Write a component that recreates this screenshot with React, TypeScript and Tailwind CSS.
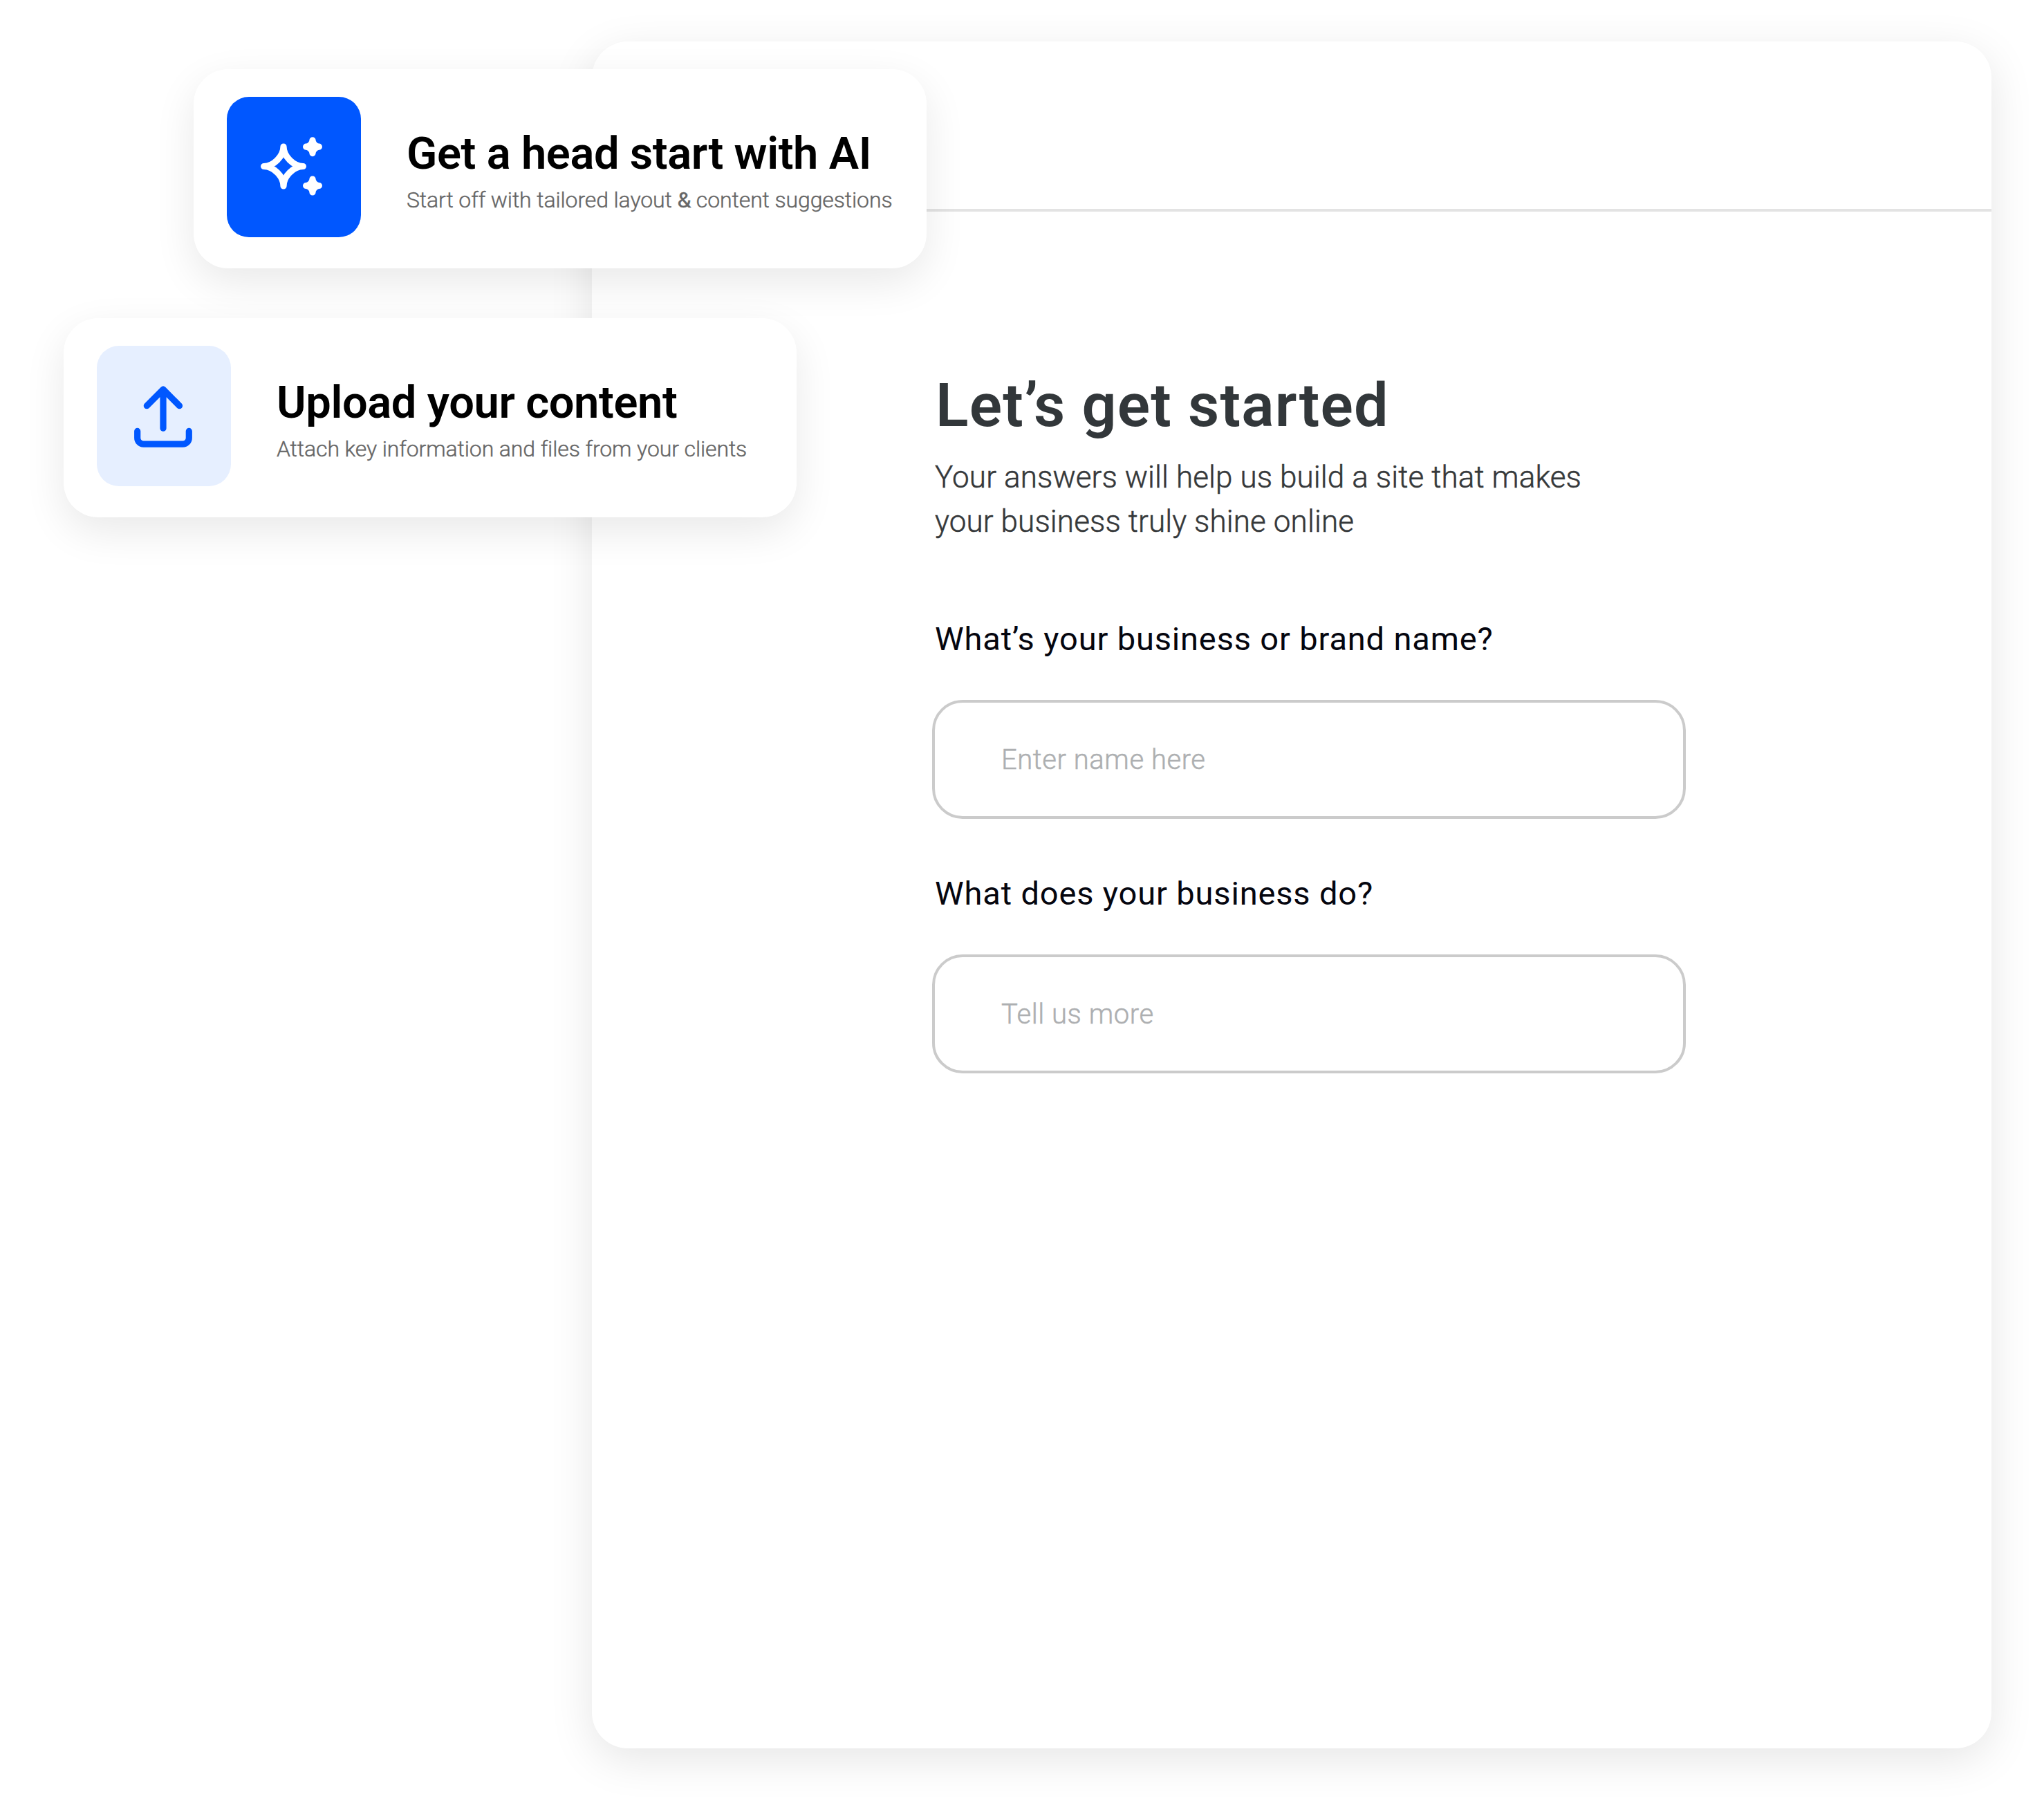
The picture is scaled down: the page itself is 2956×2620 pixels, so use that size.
import type { ReactNode } from "react";

const SparklesIcon = () => (
    <svg
        viewBox="0 0 104 104"
        className="h-[104px] w-[104px]"
        fill="none"
        stroke="currentColor"
        strokeWidth="9.2"
        strokeLinecap="round"
        strokeLinejoin="round"
    >
        <path d="M37 22.1C37 36 51.5 50.5 65.4 50.5C51.5 50.5 37 65 37 78.9C37 65 22.5 50.5 8.6 50.5C22.5 50.5 37 36 37 22.1Z" />
        <path fill="currentColor" d="M79 12.8C79 17.4 83.8 22.2 88.4 22.2C83.8 22.2 79 27 79 31.6C79 27 74.2 22.2 69.6 22.2C74.2 22.2 79 17.4 79 12.8Z" />
        <path fill="currentColor" d="M79 69.1C79 73.7 83.8 78.5 88.4 78.5C83.8 78.5 79 83.3 79 87.9C79 83.3 74.2 78.5 69.6 78.5C74.2 78.5 79 73.7 79 69.1Z" />
    </svg>
);

const UploadIcon = () => (
    <svg
        viewBox="0 0 104 104"
        className="h-[104px] w-[104px]"
        fill="none"
        stroke="currentColor"
        strokeWidth="9.2"
        strokeLinecap="round"
        strokeLinejoin="round"
    >
        <path d="M51 69.2V13M27.3 36.7L51 13L74.5 36.7" />
        <path d="M13.7 73.4V83.2C13.7 88.2 17.7 92.2 22.7 92.2H79.3C84.3 92.2 88.3 88.2 88.3 83.2V73.4" />
    </svg>
);

const FeatureCard = ({
    title,
    description,
    icon,
    className,
    iconClassName,
}: {
    title: string;
    description: ReactNode;
    icon: ReactNode;
    className: string;
    iconClassName: string;
}) => (
    <div className={`flex h-[288px] w-[1060px] rounded-[50px] bg-white pt-10 pl-12 shadow-[0_20px_60px_rgba(0,0,0,0.09)] ${className}`}>
        <div className={`flex h-[203px] w-[194px] shrink-0 items-center justify-center rounded-[32px] ${iconClassName}`}>
            {icon}
        </div>
        <div className="ml-[66px] pt-[42px] whitespace-nowrap">
            <h3 className="text-[65px] leading-[80px] font-semibold tracking-[-0.4px] text-black">
                {title}
            </h3>
            <p className="mt-[3px] text-[32px] leading-[48px] font-light tracking-[-0.12px] text-[#666] [-webkit-text-stroke:0.4px]">
                {description}
            </p>
        </div>
    </div>
);

const Field = ({ label, placeholder }: { label: string; placeholder: string }) => (
    <div className="flex flex-col">
        <label className="ml-1 text-[47px] leading-[56px] tracking-[0.85px] text-[#05060f]">
            {label}
        </label>
        <div className="mt-[60px] flex h-[172px] w-[1090px] items-center rounded-[44px] border-4 border-[#cbcbcb] bg-white pt-0.5 pl-[96px] text-[40px] font-light tracking-[0.55px] text-[#adafb1] [-webkit-text-stroke:0.5px]">
            {placeholder}
        </div>
    </div>
);

export default function App() {
    return (
        <div className="relative h-[2620px] w-[2956px] overflow-hidden bg-white pt-[60px] pl-[856px] font-[Roboto,sans-serif]">
            <main className="h-[2468px] w-[2024px] rounded-[52px] bg-white shadow-[0_16px_64px_rgba(0,0,0,0.1)]">
                <header className="h-[246px] border-b-4 border-[#e3e3e3]" />
                <section className="flex flex-col pt-[224px] pl-[492px]">
                    <h1 className="ml-[5px] text-[88px] leading-[112px] font-semibold tracking-[1.2px] text-[#32373a]">
                        Let’s get started
                    </h1>
                    <p className="mt-4 ml-1 text-[44px] leading-[64px] font-light tracking-[0.12px] text-[#35383a] [-webkit-text-stroke:0.5px]">
                        Your answers will help us build a site that makes
                        <br />
                        your business truly shine online
                    </p>
                    <div className="mt-[110px] flex flex-col gap-20">
                        <Field label="What’s your business or brand name?" placeholder="Enter name here" />
                        <Field label="What does your business do?" placeholder="Tell us more" />
                    </div>
                </section>
            </main>
            <FeatureCard
                title="Get a head start with AI"
                description={
                    <>
                        Start off with tailored layout <span className="font-normal">&amp;</span> content suggestions
                    </>
                }
                icon={<SparklesIcon />}
                className="absolute top-[100px] left-[280px]"
                iconClassName="bg-[#0057ff] text-white"
            />
            <FeatureCard
                title="Upload your content"
                description="Attach key information and files from your clients"
                icon={<UploadIcon />}
                className="absolute top-[460px] left-[92px]"
                iconClassName="bg-[#e6efff] text-[#0057ff]"
            />
        </div>
    );
}
